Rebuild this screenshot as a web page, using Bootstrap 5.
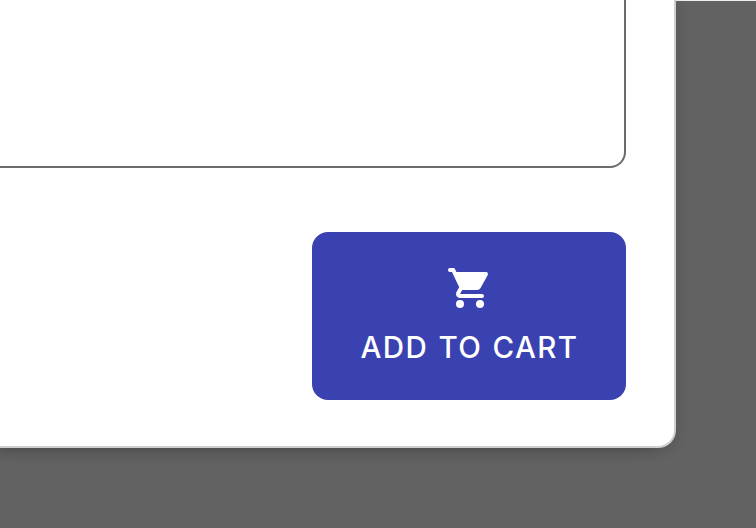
<!DOCTYPE html>
<html lang="en">
<head>
<meta charset="utf-8">
<meta name="viewport" content="width=device-width, initial-scale=1">
<title>Add to cart</title>
<link rel="stylesheet" href="https://cdn.jsdelivr.net/npm/bootstrap@5.3.0/dist/css/bootstrap.min.css">
<style>
body { background: #626262; height: 528px; }
.page-edge { border-top: 1px solid #e9efed; height: 528px; }
.dialog-panel {
  width: 676px; height: 448px; margin-top: -1px;
  padding: 0 48px 46px 0;
  border: solid #cecfcf; border-width: 0 2px 2px 0;
  border-radius: 0 0 18px 0;
  box-shadow: -16px 2px 16px rgba(0,0,0,.14), 0 2px 14px rgba(0,0,0,.14);
}
.notes-field {
  height: 168px; border: solid #6b6b6b; border-width: 0 2px 2px 0;
  border-radius: 0 0 16px 0; background: #fff;
}
.cart-btn {
  --bs-btn-bg: #3a42b1; --bs-btn-border-color: #3a42b1; --bs-btn-color: #fff;
  --bs-btn-border-radius: 16px;
  width: 314px; height: 168px; padding: 32px 0 0 2px; border: 0;
  font: 500 29.5px/44px Inter, "Liberation Sans", sans-serif;
  letter-spacing: 1.4px; word-spacing: 1px;
}
.cart-label { margin: 13px 0 0 -1px; }
</style>
</head>
<body class="overflow-hidden">
<div class="page-edge">
  <main class="dialog-panel bg-white d-flex flex-column justify-content-between">
    <div class="notes-field w-100"></div>
    <button type="button" class="btn cart-btn align-self-end d-flex flex-column align-items-center">
      <svg width="48" height="48" viewBox="0 0 24 24" fill="currentColor" class="flex-shrink-0" aria-hidden="true">
        <path d="M2 2h1.64c.38 0 .74.22.9.57L5.21 4H20c.76 0 1.24.82.87 1.48l-3.58 6.49A2 2 0 0 1 15.55 13H8.1L7 15h11a1 1 0 0 1 0 2H7c-1.52 0-2.48-1.63-1.75-2.96L6.6 11.59 3 4H2a1 1 0 0 1 0-2z"/>
        <circle cx="7" cy="20" r="2"/><circle cx="17" cy="20" r="2"/>
      </svg>
      <span class="cart-label">ADD TO CART</span>
    </button>
  </main>
</div>
<script src="https://cdn.jsdelivr.net/npm/bootstrap@5.3.0/dist/js/bootstrap.bundle.min.js"></script>
</body>
</html>
